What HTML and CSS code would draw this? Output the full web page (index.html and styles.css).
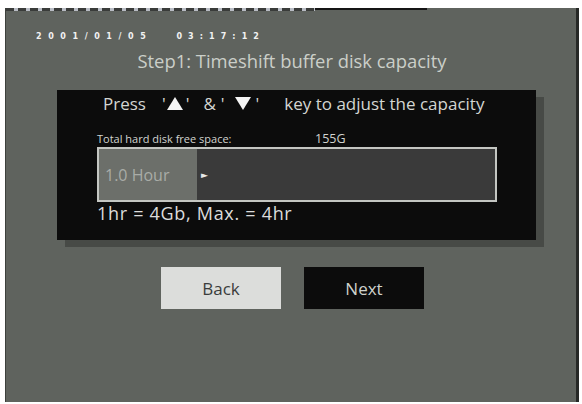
FILE: index.html
```html
<!DOCTYPE html>
<html>
<head>
<meta charset="utf-8">
<link rel="stylesheet" href="styles.css">
</head>
<body>
<div class="screen">
  <div class="topline"><span class="dashes"></span><span class="bar"></span></div>
  <div class="clock"><span class="date">2001/01/05</span><span class="time">03:17:12</span></div>
  <div class="title">Step1: Timeshift buffer disk capacity</div>
  <div class="dialog">
    <div class="hint">
      <span>Press</span>
      <span class="q q1">'</span>
      <svg class="tri up" width="16" height="13" viewBox="0 0 16 13"><polygon points="8,0 16,13 0,13" fill="#f4f4f4"/></svg>
      <span class="q q2">'</span>
      <span class="amp">&amp;</span>
      <span class="q q3">'</span>
      <svg class="tri down" width="16" height="13" viewBox="0 0 16 13"><polygon points="0,0 16,0 8,13" fill="#f4f4f4"/></svg>
      <span class="q q4">'</span>
      <span class="rest">key to adjust the capacity</span>
    </div>
    <div class="free"><span class="free-label">Total hard disk free space:</span><span class="free-val">155G</span></div>
    <div class="slider">
      <div class="fill">1.0 Hour</div>
      <div class="arrow">►</div>
    </div>
    <div class="note">1hr = 4Gb, Max. = 4hr</div>
  </div>
  <div class="buttons">
    <div class="btn back">Back</div>
    <div class="btn next">Next</div>
  </div>
</div>
</body>
</html>
```
FILE: styles.css
```css
html, body { margin: 0; padding: 0; background: #ffffff; }
body { font-family: "Open Sans", "DejaVu Sans", sans-serif; }
.screen {
  margin: 8px 0 0 5px;
  width: 570px;
  height: 394px;
  background: #5f635e;
  border-left: 1px solid #3d403c;
  border-right: 3px solid #262826;
  overflow: hidden;
}
.topline { display: flex; height: 3px; }
.dashes {
  width: 309px;
  height: 3px;
  background: repeating-linear-gradient(90deg, #3a3c3a 0 8px, #b8bcc4 8px 12px);
}
.bar { width: 112px; height: 2px; background: #151515; }
.clock {
  margin-top: 19px;
  padding-left: 30px;
  height: 14px;
  font-family: "DejaVu Sans", sans-serif;
  font-weight: bold;
  font-size: 8px;
  line-height: 14px;
  color: #f2f2f2;
  letter-spacing: 6.6px;
  white-space: nowrap;
}
.time { margin-left: 24px; letter-spacing: 6.1px; }
.title {
  margin-top: 5px;
  padding-left: 2px;
  text-align: center;
  font-size: 18.4px;
  line-height: 24px;
  color: #cbcfc9;
}
.dialog {
  margin: 17px 0 0 51px;
  width: 479px;
  height: 150px;
  background: #0c0c0c;
  box-shadow: 8px 7px 0 #474a46;
  box-sizing: border-box;
  padding: 0 0 0 40px;
}
.hint {
  display: flex;
  align-items: center;
  height: 26px;
  margin-left: 6px;
  font-size: 17px;
  color: #d4d6d2;
  white-space: nowrap;
}
.q1 { margin-left: 16px; }
.up { margin-left: 1px; }
.q2 { margin-left: 3px; }
.amp { margin-left: 14px; }
.q3 { margin-left: 5px; }
.down { margin-left: 10px; }
.q4 { margin-left: 5px; }
.rest { margin-left: 25px; }
.free {
  margin-top: 15px;
  display: flex;
  align-items: baseline;
  font-size: 11px;
  line-height: 16px;
  color: #d2d4d0;
}
.free-label { width: 218px; }
.free-val { font-size: 12.5px; }
.slider {
  display: flex;
  align-items: center;
  width: 400px;
  height: 55px;
  box-sizing: border-box;
  border: 2px solid #c4c6c2;
  background: #3a3a3a;
}
.fill {
  width: 98px;
  height: 100%;
  background: #6c6f6a;
  box-sizing: border-box;
  padding-left: 6px;
  display: flex;
  align-items: center;
  font-size: 16px;
  color: #a9aca7;
}
.arrow {
  margin-left: 4px;
  font-size: 9px;
  color: #e8e8e8;
}
.note {
  font-size: 18px;
  letter-spacing: 0.7px;
  line-height: 22px;
  color: #dcdcdc;
}
.buttons {
  display: flex;
  gap: 23px;
  margin: 27px 0 0 155px;
}
.btn {
  width: 120px;
  height: 42px;
  display: flex;
  align-items: center;
  justify-content: center;
  font-size: 17px;
}
.back { background: #dcdddb; color: #3a3c3c; }
.next { background: #0c0c0c; color: #cfd2cc; }
```
